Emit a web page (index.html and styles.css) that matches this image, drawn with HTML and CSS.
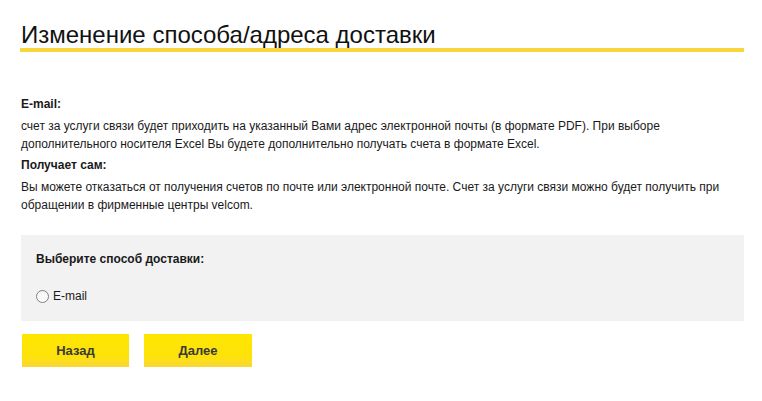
FILE: index.html
```html
<!DOCTYPE html>
<html lang="ru">
<head>
<meta charset="utf-8">
<link rel="stylesheet" href="styles.css">
</head>
<body>
<div class="page">
  <h1 class="title">Изменение способа/адреса доставки</h1>
  <div class="info">
    <p class="info-head">E-mail:</p>
    <p class="info-text">счет за услуги связи будет приходить на указанный Вами адрес электронной почты (в формате PDF). При выборе дополнительного носителя Excel Вы будете дополнительно получать счета в формате Excel.</p>
    <p class="info-head">Получает сам:</p>
    <p class="info-text">Вы можете отказаться от получения счетов по почте или электронной почте. Счет за услуги связи можно будет получить при обращении в фирменные центры velcom.</p>
  </div>
  <div class="choice">
    <p class="choice-head">Выберите способ доставки:</p>
    <label class="option"><input type="radio" name="d" class="radio"><span>E-mail</span></label>
  </div>
  <div class="actions">
    <button class="btn">Назад</button>
    <button class="btn">Далее</button>
  </div>
</div>
</body>
</html>
```
FILE: styles.css
```css
html, body {
  margin: 0;
  padding: 0;
  background: #fff;
}
body {
  font-family: Arial, "Liberation Sans", sans-serif;
  font-size: 12px;
  color: #1a1a1a;
}
.page {
  width: 724px;
  padding: 21px 0 0 20px;
}
.title {
  margin: 0;
  font-size: 24px;
  font-weight: normal;
  line-height: 27px;
  color: #111;
  padding-left: 1px;
  border-bottom: 4px solid #f8d63c;
}
.info {
  padding: 43px 0 0 1px;
}
.info p {
  margin: 0;
  line-height: 18px;
}
.info-head {
  font-weight: bold;
  margin-bottom: 4px !important;
}
.info-text {
  margin-bottom: 3px !important;
}
.choice {
  margin: 21px 0 0 1px;
  background: #f2f2f2;
  height: 86px;
  padding: 16px 0 0 15px;
  box-sizing: border-box;
}
.choice-head {
  margin: 0;
  font-weight: bold;
  line-height: 16px;
}
.option {
  display: flex;
  align-items: center;
  gap: 4px;
  margin-top: 21px;
  line-height: 16px;
}
.radio {
  appearance: none;
  -webkit-appearance: none;
  margin: 0;
  width: 13px;
  height: 13px;
  border: 1px solid #808080;
  border-radius: 50%;
  background: linear-gradient(#f4f4f4, #fff);
  box-sizing: border-box;
}
.actions {
  display: flex;
  gap: 15px;
  margin: 13px 0 0 2px;
}
.btn {
  width: 107px;
  height: 33px;
  border: 0;
  padding: 0;
  background: linear-gradient(#ffe600, #fde20a 70%, #f8d63a);
  font-family: Arial, "Liberation Sans", sans-serif;
  font-size: 13px;
  font-weight: bold;
  color: #3a3a3a;
}
.actions .btn:last-child {
  width: 108px;
}
```
